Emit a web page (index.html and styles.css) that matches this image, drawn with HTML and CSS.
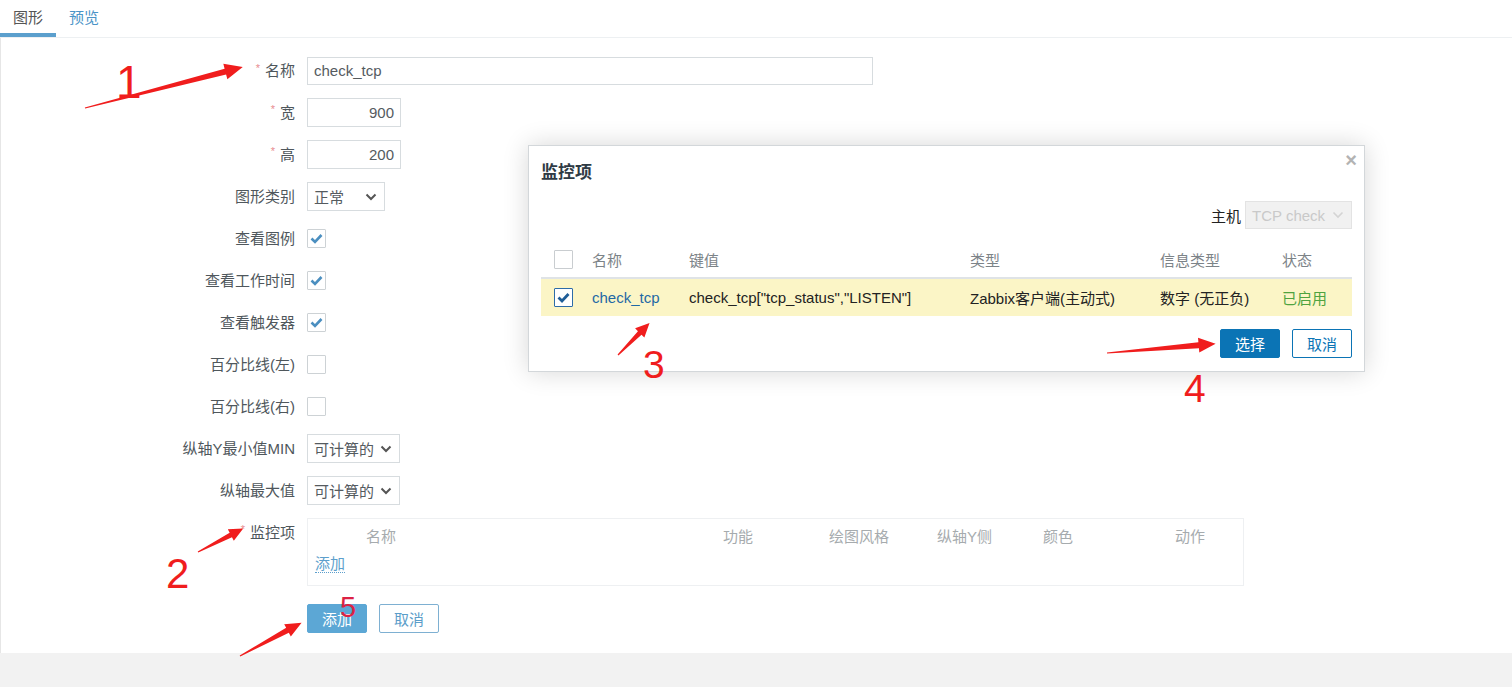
FILE: index.html
```html
<!DOCTYPE html>
<html lang="zh">
<head>
<meta charset="utf-8">
<title>图形</title>
<link rel="stylesheet" href="styles.css">
</head>
<body>
<div class="page">
  <div class="main">
    <div class="tabs">
      <a class="tab active">图形</a>
      <a class="tab link">预览</a>
    </div>
    <div class="content">
      <div class="form">
        <label class="lbl h28"><span class="req">*</span>名称</label>
        <div class="field h28"><div class="input w-name h28">check_tcp</div></div>

        <label class="lbl"><span class="req">*</span>宽</label>
        <div class="field"><div class="input w-num num">900</div></div>

        <label class="lbl"><span class="req">*</span>高</label>
        <div class="field"><div class="input w-num num">200</div></div>

        <label class="lbl">图形类别</label>
        <div class="field"><div class="select w-type"><span>正常</span><svg class="chev" width="12" height="8" viewBox="0 0 12 8"><path d="M1.5 1.5 L6 6 L10.5 1.5" fill="none" stroke="#555" stroke-width="2"/></svg></div></div>

        <label class="lbl">查看图例</label>
        <div class="field"><span class="cb"><svg width="17" height="17" viewBox="0 0 17 17"><path d="M3.5 8.5 L7 12 L13.5 5" fill="none" stroke="#4b8fc0" stroke-width="2.6"/></svg></span></div>

        <label class="lbl">查看工作时间</label>
        <div class="field"><span class="cb"><svg width="17" height="17" viewBox="0 0 17 17"><path d="M3.5 8.5 L7 12 L13.5 5" fill="none" stroke="#4b8fc0" stroke-width="2.6"/></svg></span></div>

        <label class="lbl">查看触发器</label>
        <div class="field"><span class="cb"><svg width="17" height="17" viewBox="0 0 17 17"><path d="M3.5 8.5 L7 12 L13.5 5" fill="none" stroke="#4b8fc0" stroke-width="2.6"/></svg></span></div>

        <label class="lbl">百分比线(左)</label>
        <div class="field"><span class="cb"></span></div>

        <label class="lbl">百分比线(右)</label>
        <div class="field"><span class="cb"></span></div>

        <label class="lbl">纵轴Y最小值MIN</label>
        <div class="field"><div class="select w-calc"><span>可计算的</span><svg class="chev" width="12" height="8" viewBox="0 0 12 8"><path d="M1.5 1.5 L6 6 L10.5 1.5" fill="none" stroke="#555" stroke-width="2"/></svg></div></div>

        <label class="lbl">纵轴最大值</label>
        <div class="field"><div class="select w-calc"><span>可计算的</span><svg class="chev" width="12" height="8" viewBox="0 0 12 8"><path d="M1.5 1.5 L6 6 L10.5 1.5" fill="none" stroke="#555" stroke-width="2"/></svg></div></div>

        <label class="lbl"><span class="req">*</span>监控项</label>
        <div class="field field-items">
          <div class="items">
            <div class="items-head">
              <span class="c0"></span>
              <span class="c1">名称</span>
              <span class="c2">功能</span>
              <span class="c3">绘图风格</span>
              <span class="c4">纵轴Y侧</span>
              <span class="c5">颜色</span>
              <span class="c6">动作</span>
            </div>
            <div class="items-add"><a class="dotted">添加</a></div>
          </div>
        </div>

        <span class="lbl"></span>
        <div class="field buttons">
          <button class="btn btn-main">添加</button>
          <button class="btn btn-alt">取消</button>
        </div>
      </div>
    </div>
  </div>

  <div class="dialog">
    <span class="close">×</span>
    <h4 class="dlg-title">监控项</h4>
    <div class="dlg-filter">
      <span class="host-lbl">主机</span>
      <div class="select disabled"><span>TCP check</span><svg class="chev" width="12" height="8" viewBox="0 0 12 8"><path d="M1.5 1.5 L6 6 L10.5 1.5" fill="none" stroke="#d4d4d4" stroke-width="1.6"/></svg></div>
    </div>
    <div class="dlg-table">
      <div class="dt-row dt-head">
        <span class="dc"><span class="cb cb-d"></span></span>
        <span class="dc">名称</span>
        <span class="dc">键值</span>
        <span class="dc">类型</span>
        <span class="dc">信息类型</span>
        <span class="dc">状态</span>
      </div>
      <div class="dt-row dt-sel">
        <span class="dc"><span class="cb cb-d checked"><svg width="17" height="17" viewBox="0 0 17 17"><path d="M3.5 8.5 L7 12 L13.5 5" fill="none" stroke="#1e5d97" stroke-width="2.8"/></svg></span></span>
        <span class="dc"><a class="dlink">check_tcp</a></span>
        <span class="dc">check_tcp["tcp_status","LISTEN"]</span>
        <span class="dc">Zabbix客户端(主动式)</span>
        <span class="dc">数字 (无正负)</span>
        <span class="dc green">已启用</span>
      </div>
    </div>
    <div class="dlg-foot">
      <button class="btn btn-dlg">选择</button>
      <button class="btn btn-dlg-alt">取消</button>
    </div>
  </div>

  <svg class="annot" width="1512" height="687" viewBox="0 0 1512 687">
    <g fill="#f01d1d">
      <polygon transform="translate(85 108) rotate(-14.55)" points="0,-0.6 145,-3 145,-8 163,0 145,8 145,3 0,0.6"/>
      <polygon transform="translate(198 552) rotate(-27.5)" points="0,-0.6 37,-2.5 37,-6.5 51,0 37,6.5 37,2.5 0,0.6"/>
      <polygon transform="translate(618 355) rotate(-45.5)" points="0,-0.6 31,-2.5 31,-6.5 45,0 31,6.5 31,2.5 0,0.6"/>
      <polygon transform="translate(1107 353) rotate(-4.9)" points="0,-0.6 92,-3 92,-7.5 109,0 92,7.5 92,3 0,0.6"/>
      <polygon transform="translate(240 656) rotate(-28.4)" points="0,-0.6 54,-2.8 54,-7 70,0 54,7 54,2.8 0,0.6"/>
    </g>
    <g class="nums" fill="#f01d1d">
      <text x="116" y="98" font-size="46">1</text>
      <text x="166" y="588" font-size="42">2</text>
      <text x="643" y="378" font-size="39">3</text>
      <text x="1184" y="402" font-size="39">4</text>
      <text x="340" y="617" font-size="29" fill="#dc2244">5</text>
    </g>
  </svg>
</div>
</body>
</html>
```
FILE: styles.css
```css
body {
  margin: 0;
  background: #f2f2f2;
  font-family: "Liberation Sans", "Noto Sans CJK SC", sans-serif;
  font-size: 15px;
  color: #4d555a;
}

.page {
  position: relative;
  width: 1512px;
  height: 687px;
  overflow: hidden;
}

.main {
  background: #fff;
}

.tabs {
  display: flex;
  height: 38px;
  box-sizing: border-box;
  border-bottom: 1px solid #edf0f2;
}

.tab {
  height: 37px;
  box-sizing: border-box;
  padding: 6px 13px 0;
  line-height: 24px;
  color: #555;
}

.tab.active {
  border-bottom: 4px solid #5b9fcd;
}

.tab.link {
  color: #4a94c8;
}

.content {
  border-left: 1px solid #e6e6e6;
  padding: 19px 0 20px;
}

.form {
  display: grid;
  grid-template-columns: 294px 1fr;
  column-gap: 12px;
  row-gap: 13px;
}

.lbl {
  height: 29px;
  display: flex;
  align-items: center;
  justify-content: flex-end;
  line-height: 20px;
  color: #4f575c;
  white-space: nowrap;
}

.req {
  color: #e88c8f;
  font-size: 11px;
  line-height: 11px;
  margin-right: 5px;
  position: relative;
  top: -3px;
}

.field {
  display: flex;
  align-items: center;
  height: 29px;
}

.lbl.h28,
.field.h28 {
  height: 28px;
}

.input {
  box-sizing: border-box;
  height: 29px;
  border: 1px solid #d7dcdf;
  padding: 0 6px;
  line-height: 27px;
  color: #555b5f;
}

.input.h28 {
  height: 28px;
  line-height: 26px;
}

.w-name {
  width: 566px;
}

.w-num {
  width: 94px;
}

.num {
  text-align: right;
}

.select {
  box-sizing: border-box;
  height: 29px;
  border: 1px solid #d7dcdf;
  padding: 0 7px 0 6px;
  display: flex;
  align-items: center;
  justify-content: space-between;
  color: #555b5f;
  background: #fff;
}

.w-type {
  width: 78px;
}

.w-calc {
  width: 93px;
}

.chev {
  display: block;
  flex: none;
}

.cb {
  box-sizing: border-box;
  width: 19px;
  height: 19px;
  border: 1px solid #cdd2d5;
  border-radius: 1px;
  display: inline-flex;
  align-items: center;
  justify-content: center;
  background: #fff;
}

.field-items {
  height: 68px;
  align-items: flex-start;
}

.items {
  box-sizing: border-box;
  width: 937px;
  height: 68px;
  border: 1px solid #eef0f2;
  padding: 6px 7px 0;
}

.items-head {
  display: grid;
  grid-template-columns: 43px 357px 106px 108px 106px 132px 1fr;
  height: 24px;
  line-height: 24px;
  color: #a6abae;
}

.items-head span {
  padding-left: 8px;
}

.items-head .c0 {
  padding-left: 0;
}

.items-add {
  margin-top: 3px;
  height: 24px;
  line-height: 24px;
}

.dotted {
  color: #5d9fcc;
  border-bottom: 1px dotted #5d9fcc;
}

.buttons {
  gap: 12px;
  margin-top: 5px;
}

.btn {
  box-sizing: border-box;
  height: 29px;
  width: 60px;
  border-radius: 2px;
  font-family: "Liberation Sans", "Noto Sans CJK SC", sans-serif;
  font-size: 15px;
  padding: 0;
  cursor: pointer;
}

.btn-main {
  background: #5ca7d5;
  border: 1px solid #5ca7d5;
  color: #fff;
}

.btn-alt {
  background: #fff;
  border: 1px solid #7eb0d2;
  color: #5b9dc9;
}

/* Dialog overlay */
.dialog {
  position: absolute;
  left: 528px;
  top: 145px;
  width: 837px;
  box-sizing: border-box;
  background: #fff;
  border: 1px solid #d3d7da;
  box-shadow: 0 0 24px rgba(0, 0, 0, 0.16);
  padding: 0 12px 13px;
}

.close {
  position: absolute;
  top: 4px;
  right: 7px;
  font-size: 20px;
  font-weight: bold;
  color: #b3b3b3;
  line-height: 20px;
}

.dlg-title {
  margin: 14px 0 0;
  height: 26px;
  font-size: 17px;
  line-height: 26px;
  font-weight: bold;
  color: #2f3b45;
}

.dlg-filter {
  display: flex;
  justify-content: flex-end;
  align-items: center;
  gap: 4px;
  margin-top: 15px;
  height: 28px;
  color: #222;
}

.select.disabled {
  width: 107px;
  height: 28px;
  background: #f1f1f1;
  border-color: #e3e3e3;
  color: #c9c9c9;
}

.dlg-table {
  margin-top: 13px;
}

.dt-row {
  display: grid;
  grid-template-columns: 38px 97px 281px 190px 122px 83px;
  align-items: center;
}

.dc {
  padding-left: 13px;
  white-space: nowrap;
  display: flex;
  align-items: center;
}

.dt-head {
  height: 37px;
  box-sizing: border-box;
  border-bottom: 2px solid #dfe3e6;
  color: #7c8388;
}

.dt-sel {
  height: 37px;
  background: #fbf5c6;
  color: #222;
}

.cb-d {
  border-color: #c9cdd0;
}

.cb-d.checked {
  border: 1px solid #2d6ca8;
}

.dlink {
  color: #1f69a5;
}

.green {
  color: #4fa33f;
}

.dlg-foot {
  display: flex;
  justify-content: flex-end;
  gap: 12px;
  margin-top: 13px;
}

.btn-dlg {
  background: #0b74b5;
  border: 1px solid #0b74b5;
  color: #fff;
}

.btn-dlg-alt {
  background: #fff;
  border: 1px solid #0b74b5;
  color: #0b74b5;
}

.annot {
  position: absolute;
  left: 0;
  top: 0;
  pointer-events: none;
}

.nums text {
  font-family: "Liberation Sans", sans-serif;
}
```
